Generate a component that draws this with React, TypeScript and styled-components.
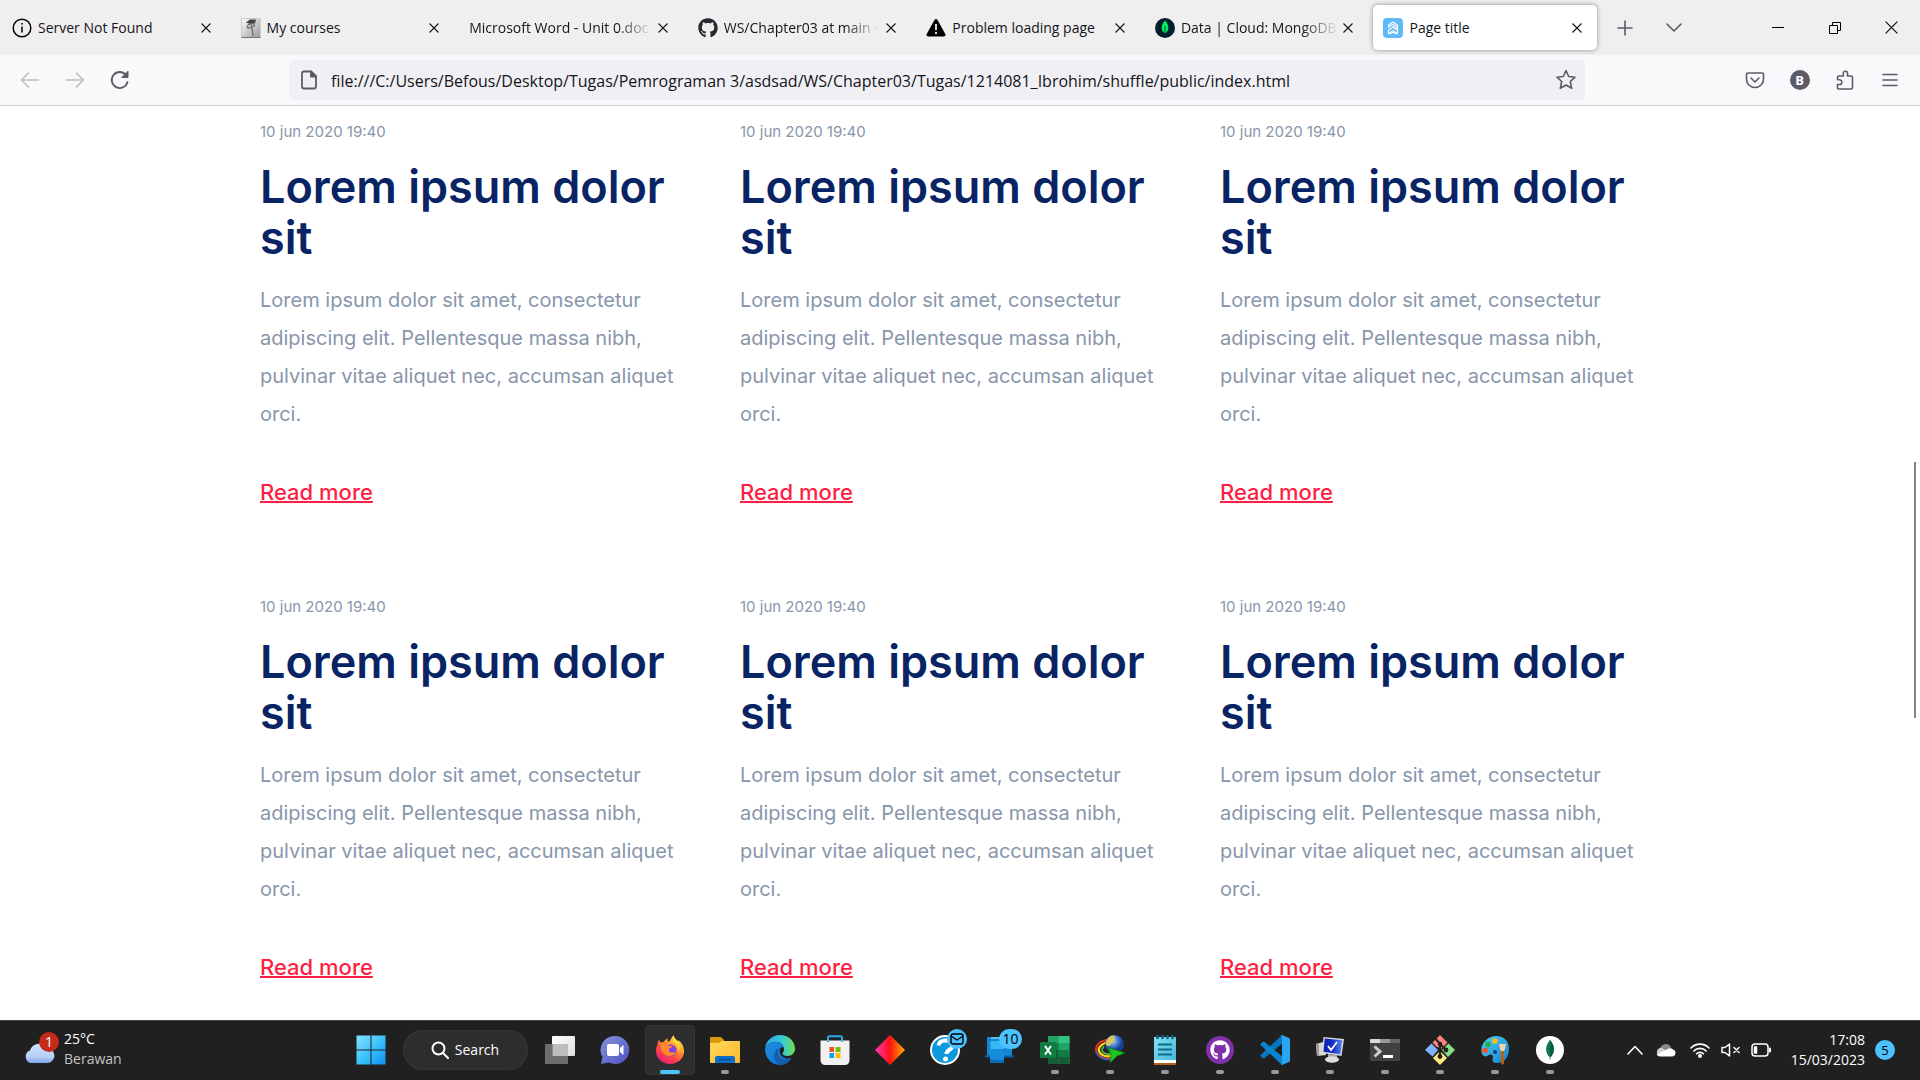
import React from "react";
import styled, { createGlobalStyle } from "styled-components";
import { FaGithub } from "react-icons/fa";

const UI_FONT = '"Open Sans", "Noto Sans", sans-serif';

const GlobalStyle = createGlobalStyle`
  *, *::before, *::after { box-sizing: border-box; }
  body { margin: 0; font-family: Inter, sans-serif; background: #fff; }
  button { border: 0; padding: 0; margin: 0; background: none; font: inherit; color: inherit; }
  svg { display: block; flex: none; }
`;

const Screen = styled.div`
  display: flex;
  flex-direction: column;
  height: 100vh;
  overflow: hidden;
`;

/* ---------- Tab strip ---------- */

const TabBar = styled.header`
  display: flex;
  flex: none;
  height: 55px;
  background: #efefef;
  font-family: ${UI_FONT};
  font-size: 14px;
  color: #15141a;
`;

const TabList = styled.nav`
  display: flex;
  flex: 0 1 1600px;
  min-width: 0;
`;

const TabSlot = styled.div`
  flex: 1 1 0;
  min-width: 0;
  padding: 5px 3px 5px 2px;
`;

const Tab = styled.div<{ $active?: boolean }>`
  display: flex;
  align-items: center;
  height: 45px;
  padding: 0 13px 0 10px;
  border-radius: 5px;
  background: ${(p) => (p.$active ? "#fff" : "transparent")};
  box-shadow: ${(p) => (p.$active ? "0 0 5px rgba(0, 0, 0, 0.4)" : "none")};
`;

const TabTitle = styled.button<{ $fade?: boolean }>`
  display: flex;
  align-items: center;
  flex: 1;
  gap: 6px;
  min-width: 0;
  white-space: nowrap;
  text-align: left;
  line-height: 24px;
  mask-image: ${(p) => (p.$fade ? "linear-gradient(to left, transparent, #000 36px)" : "none")};
`;

const CloseButton = styled.button`
  flex: none;
  width: 14px;
  height: 24px;
  display: grid;
  place-items: center;
  margin-left: 3px;
`;

const StripButton = styled.button`
  width: 49px;
  display: grid;
  place-items: center;
  color: #5b5b66;
`;

const WindowControls = styled.div`
  display: flex;
  margin-left: auto;
`;

const WindowButton = styled.button`
  width: 57px;
  display: grid;
  place-items: center;
  color: #000;
`;

/* ---------- Navigation toolbar ---------- */

const Toolbar = styled.div`
  display: flex;
  align-items: center;
  flex: none;
  height: 51px;
  padding: 0 8px 0 7px;
  background: #f9f9fb;
  border-bottom: 1px solid #cccccf;
`;

const ToolButton = styled.button<{ $dim?: boolean }>`
  width: 45px;
  height: 40px;
  flex: none;
  display: grid;
  place-items: center;
  color: ${(p) => (p.$dim ? "#bdbdc2" : "#5b5b66")};
`;

const AddressBar = styled.form`
  display: flex;
  align-items: center;
  flex: 1;
  min-width: 0;
  height: 40px;
  margin: 0 147px;
  padding: 0 8px 0 10px;
  gap: 12px;
  border-radius: 5px;
  background: #f0f0f4;
  color: #5b5b66;
`;

const AddressInput = styled.input`
  flex: 1;
  min-width: 0;
  border: 0;
  padding: 2px 0 0;
  outline: 0;
  background: transparent;
  font-family: ${UI_FONT};
  font-size: 16px;
  line-height: 24px;
  color: #15141a;
`;

const Avatar = styled.span`
  width: 20px;
  height: 20px;
  border-radius: 50%;
  display: grid;
  place-items: center;
  background: #5b5b66;
  color: #fff;
  font: 700 13px/20px ${UI_FONT};
`;

/* ---------- Page ---------- */

const Viewport = styled.main`
  position: relative;
  flex: 1;
  min-height: 0;
  overflow: hidden;
`;

const PostGrid = styled.div`
  display: grid;
  grid-template-columns: repeat(3, minmax(0, 1fr));
  gap: 85px 40px;
  max-width: 1440px;
  margin: 0 auto;
  padding: 14px 20px 0;
`;

const Post = styled.article`
  display: flex;
  flex-direction: column;
  align-items: flex-start;
`;

const PostDate = styled.time`
  font-size: 15px;
  line-height: 24px;
  color: #8896ab;
`;

const PostTitle = styled.h2`
  margin: 17px 0 18px;
  font-size: 45px;
  font-weight: 600;
  line-height: 51px;
  color: #092464;
`;

const PostText = styled.p`
  margin: 0 0 41px;
  font-size: 20px;
  line-height: 38px;
  color: #8896ab;
`;

const ReadMore = styled.a`
  font-size: 22px;
  font-weight: 500;
  line-height: 36px;
  color: #ff1f45;
  text-decoration: underline;
  text-decoration-thickness: 2px;
`;

const ScrollThumb = styled.div`
  position: absolute;
  top: 39%;
  right: 4px;
  width: 2px;
  height: 28%;
  background: #858585;
`;

/* ---------- Taskbar ---------- */

const Taskbar = styled.footer`
  display: grid;
  grid-template-columns: 1fr auto 1fr;
  align-items: center;
  flex: none;
  height: 60px;
  background: #202020;
  box-shadow: inset 0 1px 0 #404242;
  color: #fff;
  font-family: ${UI_FONT};
  font-size: 14px;
  line-height: 20px;
`;

const Weather = styled.button`
  display: flex;
  align-items: center;
  gap: 5px;
  padding: 0 0 2px 23px;
  text-align: left;
`;

const Muted = styled.span`
  color: #c4c4c4;
`;

const Stack = styled.span`
  display: flex;
  flex-direction: column;
`;

const AppRow = styled.div`
  display: flex;
  align-items: center;
  gap: 5px;
`;

const AppButton = styled.button<{ $active?: boolean; $open?: boolean }>`
  position: relative;
  width: 50px;
  height: 50px;
  display: grid;
  place-items: center;
  border-radius: 5px;
  background: ${(p) => (p.$active ? "#2e2e2e" : "transparent")};
  box-shadow: ${(p) => (p.$active ? "inset 0 0 0 1px #373737" : "none")};

  &::after {
    content: "";
    position: absolute;
    bottom: 1px;
    left: 50%;
    transform: translateX(-50%);
    width: ${(p) => (p.$active ? 20 : 8)}px;
    height: 4px;
    border-radius: 2px;
    background: ${(p) => (p.$active ? "#4cc2ff" : "#999")};
    display: ${(p) => (p.$active || p.$open ? "block" : "none")};
  }
`;

const Badge = styled.span`
  position: absolute;
  top: 4px;
  right: 3px;
  min-width: 20px;
  height: 20px;
  padding: 0 3px;
  border-radius: 10px;
  display: grid;
  place-items: center;
  background: #4cc2ff;
  color: #000;
  font-size: 14px;
  line-height: 20px;
`;

const SearchButton = styled.button`
  display: flex;
  align-items: center;
  justify-content: center;
  gap: 6px;
  width: 125px;
  height: 40px;
  margin: 0 2px;
  border-radius: 20px;
  background: #2d2d2d;
  box-shadow: inset 0 0 0 1px #363636;
`;

const Tray = styled.div`
  display: flex;
  align-items: center;
  justify-content: flex-end;
  padding-right: 25px;
`;

const TrayButton = styled.button<{ $w: number }>`
  width: ${(p) => p.$w}px;
  height: 40px;
  display: grid;
  place-items: center;
`;

const Clock = styled.button`
  display: flex;
  flex-direction: column;
  text-align: right;
  margin: 0 10px 0 13px;
`;

const Count = styled.span`
  width: 20px;
  height: 20px;
  border-radius: 50%;
  background: #4cc2ff;
  color: #000;
  text-align: center;
  font-size: 13px;
`;

/* ---------- Icons ---------- */

const Cross = ({ size = 10 }: { size?: number }) => (
  <svg width={size} height={size} viewBox="0 0 10 10" fill="none" stroke="currentColor" strokeWidth={11 / size}>
    <path d="M.5.5l9 9M9.5.5l-9 9" />
  </svg>
);

const InfoIcon = () => (
  <svg width="20" height="20" viewBox="0 0 20 20" fill="none" stroke="#000" strokeWidth="1.5">
    <circle cx="10" cy="10" r="8.8" />
    <path d="M10 8.5v6" />
    <circle cx="10" cy="5.8" r=".5" fill="#000" strokeWidth="1" />
  </svg>
);

const CoursesIcon = () => (
  <svg width="20" height="20" viewBox="0 0 20 20">
    <defs>
      <linearGradient id="courses" x2="1" y2="1">
        <stop stopColor="#fff" />
        <stop offset="1" stopColor="#999" />
      </linearGradient>
    </defs>
    <rect x=".5" y=".5" width="19" height="19" fill="url(#courses)" stroke="#ccc" />
    <path d="M.5 19.5h19" stroke="#777" />
    <path d="M5 4.500l4-3h6l-1 4-5 .5z" fill="#444" />
    <path d="M8 6c2 0 3 1 3 3l1 9M8 6c-2 2-2 4-1 4 2 0 3-1 4 0M13 5v4" fill="none" stroke="#777" strokeWidth="1.500" />
  </svg>
);

const WarningIcon = () => (
  <svg width="20" height="20" viewBox="0 0 20 20">
    <path d="M8.500 2q1.500-2 3 0l7.800 14q.8 2.500-1.500 2.500H2.200Q-.1 18.500.7 16z" fill="#000" />
    <path d="M10 6v6M10 14v2" stroke="#efefef" strokeWidth="1.800" />
  </svg>
);

const MongoTabIcon = () => (
  <svg width="20" height="20" viewBox="0 0 20 20">
    <circle cx="10" cy="10" r="10" fill="#001e2b" />
    <path d="M10 2.500c5 5.500 4 10.500 0 13-4-2.500-5-7.500 0-13z" fill="#00ed64" />
    <path d="M10 8v9.500" stroke="#001e2b" strokeWidth=".8" />
  </svg>
);

const ShuffleIcon = () => (
  <svg width="20" height="20" viewBox="0 0 20 20" fill="none" stroke="#fff" strokeWidth="1.100" strokeLinejoin="round" strokeLinecap="round">
    <rect width="20" height="20" rx="4" fill="#5fb9f5" stroke="none" />
    <path d="M5.500 8.800V7L10 4l4.500 3v2.200" />
    <path d="M5.500 9L10 6.200l4.500 3v2.600L10 8.800" />
    <path d="M5.500 12.200L10 9l4.500 3v3.800L10 12.600l-4.500 3.200z" />
    <path d="M7.500 15.800L10 14l2.500 1.800" />
  </svg>
);

const WindowsLogo = () => (
  <svg width="30" height="30" viewBox="0 0 30 30">
    <defs>
      <linearGradient id="win" x2="1" y2="1">
        <stop stopColor="#84e2ff" />
        <stop offset=".5" stopColor="#3cc3fb" />
        <stop offset="1" stopColor="#0b8ff5" />
      </linearGradient>
    </defs>
    <path d="M.5.500h14v14h-14zM15.500.500h14v14h-14zM.5 15.500h14v14h-14zM15.500 15.500h14v14h-14z" fill="url(#win)" />
  </svg>
);

const CloudBadge = () => (
  <svg width="36" height="34" viewBox="0 0 36 34">
    <defs>
      <linearGradient id="cloud" y2="1" x2="0">
        <stop stopColor="#d4e3fb" />
        <stop offset=".7" stopColor="#b5cdf6" />
        <stop offset="1" stopColor="#7ba3ec" />
      </linearGradient>
    </defs>
    <path d="M8 31a6.500 6.500 0 0 1-1-12.500 10 10 0 0 1 18-2A7.300 7.300 0 0 1 25 31z" fill="url(#cloud)" />
    <circle cx="26" cy="10" r="10" fill="#c42b1c" />
    <text x="26" y="15" fill="#fff" textAnchor="middle" fontSize="14">1</text>
  </svg>
);

const Art = ({ children }: { children: React.ReactNode }) => (
  <svg width="30" height="30" viewBox="0 0 30 30">{children}</svg>
);

const TaskView = () => (
  <Art>
    <defs>
      <linearGradient id="tv" x2="1" y2="1"><stop stopColor="#fff" /><stop offset="1" stopColor="#ddd" /></linearGradient>
    </defs>
    <rect x="7" y="1" width="23" height="20" rx="1" fill="url(#tv)" />
    <rect y="9" width="23" height="20" rx="1" fill="#7b7b7b" opacity=".85" />
    <path d="M8 9h15v12H8z" fill="#bdbdbd" />
  </Art>
);

const Chat = () => (
  <Art>
    <defs>
      <linearGradient id="chat" y2="1"><stop stopColor="#8297d8" /><stop offset="1" stopColor="#5050c5" /></linearGradient>
    </defs>
    <path d="M15 1a14 14 0 1 1-6 26.500L1 29l1.500-7A14 14 0 0 1 15 1z" fill="url(#chat)" />
    <rect x="7" y="9" width="12" height="12" rx="2" fill="#fff" />
    <path d="M20 13l3.500-3v10L20 17z" fill="#fff" />
  </Art>
);

const Firefox = () => (
  <Art>
    <defs>
      <linearGradient id="ff" x1=".85" x2=".2" y2="1">
        <stop stopColor="#fff44f" /><stop offset=".35" stopColor="#ffa12b" /><stop offset=".65" stopColor="#ff4a42" /><stop offset="1" stopColor="#e31587" />
      </linearGradient>
      <linearGradient id="ffb" y2="1"><stop stopColor="#b833e1" /><stop offset="1" stopColor="#5b4bd8" /></linearGradient>
    </defs>
    <path d="M4 4.500c.3 1.500 1 2.500 2 3 1-.6 2-.8 3.200-.8C10 5 11 4.300 12.500 3.500c-.3 1.500 0 2.500 1 3.500 2.500-1.500 3-5 5-7 .5 3 3 4.500 4.500 6.500l.3-1.500C27 8 29.500 12 29 17.500 28.300 24 22.500 29 15 29S1.500 24 1 16.500c-.2-3 .5-5 1.500-6.500C2.500 8 3 6 4 4.500z" fill="url(#ff)" />
    <circle cx="15.500" cy="15.500" r="6" fill="url(#ffb)" />
    <path d="M6 10c3-2 6-1 7.500 1h4c-.5 1.500-2.500 2-3.500 2.500-.8 2 .5 4 3 4 2 0 2.500-.5 3.500 0-1 3-5 4.500-8.500 3C7 18.500 5 14 6 10z" fill="#ff8a2a" />
    <path d="M18 7c4 2 6 6 5 10 3-4 2-9-2-12l-2-3z" fill="#ffde3c" />
  </Art>
);

const Explorer = () => (
  <Art>
    <defs>
      <linearGradient id="fold" y2="1"><stop stopColor="#ffd95f" /><stop offset="1" stopColor="#fbb82a" /></linearGradient>
    </defs>
    <path d="M0 3q0-1 1-1h9q1 0 2 1l2 2v7H0z" fill="#dc9a0a" />
    <path d="M12 6h17q1 0 1 1v20q0 1-1 1H1q-1 0-1-1V8h9z" fill="url(#fold)" />
    <path d="M5 28v-5q0-2 2-2h16q2 0 2 2v5z" fill="#0f6fc6" />
    <path d="M9 24.500h12" stroke="#0a4a8a" strokeWidth="1.500" />
  </Art>
);

const Edge = () => (
  <Art>
    <defs>
      <linearGradient id="e1" x2="1"><stop stopColor="#22a4e8" /><stop offset=".6" stopColor="#3bc9d2" /><stop offset="1" stopColor="#6fe04b" /></linearGradient>
      <linearGradient id="e2" y2="1"><stop stopColor="#1b8ddf" /><stop offset="1" stopColor="#0c74d4" /></linearGradient>
    </defs>
    <path d="M15 0C7 0 .8 6 .2 13 3 8.500 7 7 11 7c5 0 8 3.500 8 7.500 0 2-1.500 3-1.500 4s2 2.500 5 2.500c4.500 0 7.500-3.500 7.500-7C30 6 23.500 0 15 0z" fill="url(#e1)" />
    <path d="M.1 13.500C-.5 22 6 30 15 30c5 0 9-3 11-6.500C19 25 13 20 15 14c.5-1.500 2-2 3.500-1.500C17.500 9 15 7 11 7 5.500 7 1 10 .1 13.500z" fill="url(#e2)" />
    <path d="M14 12.500c-3 1.500-5 4.500-5 8.500 0 4 2.500 8 7 9 4.500 0 8-3 10-6.500.5-.7-.2-1-.8-.7-2 1.200-4.500 1.600-7 1.200C14 23 11.500 17.500 14 12.500z" fill="#145ea9" />
  </Art>
);

const Store = () => (
  <Art>
    <path d="M8 7V2.500q0-1.200 1.200-1.200h11.600q1.200 0 1.200 1.200V7" fill="none" stroke="#29a9ea" strokeWidth="2" />
    <path d="M.5 5.500h29V25q0 5-5 5h-19q-5 0-5-5z" fill="#f1f1f1" />
    <path d="M9.500 12H14v5H9.500z" fill="#f25022" /><path d="M15.500 12h5v5h-5z" fill="#7fba00" />
    <path d="M9.500 18H14v5H9.500z" fill="#00a4ef" /><path d="M15.500 18h5v5h-5z" fill="#ffb900" />
    <path d="M8 5.500V7M22 5.500V7" stroke="#29a9ea" strokeWidth="2" />
  </Art>
);

const Diamond = () => (
  <Art>
    <defs>
      <linearGradient id="dia" x2="1"><stop stopColor="#ff37b5" /><stop offset=".5" stopColor="#ff1212" /><stop offset="1" stopColor="#ffb000" /></linearGradient>
    </defs>
    <path d="M15 0l15 15-15 15L0 15z" fill="url(#dia)" />
  </Art>
);

const Help = () => (
  <Art>
    <circle cx="15" cy="15" r="14" fill="#0d99dc" stroke="#fff" strokeWidth="2" />
    <path d="M8.500 10.500C9 7 12 5.500 15.500 5.500c4 0 7 2 7 5 0 4.500-6 4-6 8.500" fill="none" stroke="#fff" strokeWidth="4" />
    <circle cx="15.500" cy="24" r="2.500" fill="#fff" />
  </Art>
);

const Phone = () => (
  <Art>
    <path d="M2 2h25v19H2z" fill="#1684d0" /><path d="M0 20.500h29v2H0z" fill="#0b5ea8" />
    <path d="M5.500 6H19v22H5.500z" fill="#36b8f5" /><path d="M5.500 14H19v14H5.500z" fill="#168bdc" /><path d="M5.500 25H19v3H5.500z" fill="#0b69ba" />
    <path d="M6 3h12" stroke="#70d5ff" strokeWidth="1.500" />
  </Art>
);

const Excel = () => (
  <Art>
    <path d="M8 1h21.500v28H8z" fill="#21a366" /><path d="M18.500 1h11v7h-11z" fill="#33c481" />
    <path d="M8 8h10.500v7H8z" fill="#107c41" /><path d="M18.500 15h11v14h-11z" fill="#107c41" /><path d="M8 15h10.500v14H8z" fill="#185c37" /><path d="M18.500 22h11v7h-11z" fill="#185c37" />
    <rect y="7" width="16" height="16" rx="1" fill="#107c41" />
    <path d="M5 11l6 8.500M11 11l-6 8.500" stroke="#fff" strokeWidth="2" />
  </Art>
);

const Downloader = () => (
  <Art>
    <defs>
      <radialGradient id="globe" cx=".4" cy=".3"><stop stopColor="#cfe2ff" /><stop offset=".4" stopColor="#5f97ea" /><stop offset="1" stopColor="#173f91" /></radialGradient>
    </defs>
    <g fill="none" strokeLinecap="round">
      <path d="M11 5C4 6-1 12 2 18c3 5 9 7 15 5" stroke="#e5311d" strokeWidth="2.200" />
      <path d="M10 8c-5 2-8 6-5 10 3 3 7 4 11 3" stroke="#ffd61e" strokeWidth="2.200" />
      <path d="M8.500 12c-2 2-2 4 0 5.500 2 1.500 5 2 7.500 1.500" stroke="#4fb83c" strokeWidth="1.800" />
      <path d="M1 17c2 6 10 9 17 7" stroke="#2f62d8" strokeWidth="1.400" />
    </g>
    <circle cx="19.500" cy="9.500" r="9.500" fill="url(#globe)" />
    <path d="M11 6c2-4 6-6 8-5.500 1.500 1.500 0 3 .5 5-1 2.500-3 2-4 4.500-1 1.500-3 1-4.500 0z" fill="#d9c558" />
    <path d="M13 12.500l17 5.500-8 3-7 7 1-8z" fill="#1fc41f" stroke="#0b7b12" strokeWidth=".8" />
  </Art>
);

const Notepad = () => (
  <Art>
    <defs><linearGradient id="note" y2="1"><stop stopColor="#83e2f4" /><stop offset="1" stopColor="#43b8d8" /></linearGradient></defs>
    <path d="M4 2h22v24H4z" fill="url(#note)" /><path d="M4 25h22v3H4z" fill="#fff" /><path d="M4 28h22v2H4z" fill="#b35c14" />
    <path d="M8 9.500h14M8 14.500h14M8 19.500h14" stroke="#116b8d" strokeWidth="1.800" />
    <path d="M7.500 1v2M12.500 1v2M17.500 1v2M22.500 1v2" stroke="#17607a" strokeWidth="2.600" strokeLinecap="round" />
  </Art>
);

const GithubDesktop = () => (
  <Art>
    <circle cx="15" cy="15" r="14" fill="#8131a7" />
    <FaGithub x="5" y="5" size={20} color="#fff" />
  </Art>
);

const Code = () => (
  <Art>
    <path d="M22 0L0 20.500 2.500 23q1 .6 2 0L23 8z" fill="#0876be" />
    <path d="M22 30L0 9.500 2.500 7q1-.6 2 0L23 22z" fill="#0b84cf" />
    <path d="M22 0l7 3q1 .5 1 1.500v21q0 1-1 1.500l-7 3q-1 0-2-1 2 1.500 2-1V2q0-2.500-2-1 1-1 2-1z" fill="#2aa5f1" />
  </Art>
);

const Putty = () => (
  <Art>
    <defs><linearGradient id="crt" x2="1"><stop stopColor="#0a1fb4" /><stop offset=".5" stopColor="#1530c8" /><stop offset="1" stopColor="#5a8cf0" /></linearGradient></defs>
    <path d="M1 9l7-2 3 13-9 1z" fill="#d8d8d8" /><path d="M1 9l3-1v13l-2 0z" fill="#9c9c9c" />
    <path d="M8.500 2L29 4l-2.500 17L7 18z" fill="#d9d9d9" />
    <path d="M9.800 3.500L27.300 5.200 25.300 19.200 8.500 16.700z" fill="url(#crt)" />
    <path d="M13 11l3 4 6-8" stroke="#fff" strokeWidth="1.800" fill="none" />
    <path d="M13 19l9 1.200V23h-9z" fill="#aaa" /><ellipse cx="17" cy="24.500" rx="7" ry="3.200" fill="#ddd" />
  </Art>
);

const TerminalArt = () => (
  <Art>
    <rect y="4" width="30" height="22" rx="1" fill="#414141" /><path d="M0 5q0-1 1-1h9v4H0z" fill="#d8d8d8" /><path d="M10 4h10v4H10z" fill="#999" /><path d="M20 4h9q1 0 1 1v3H20z" fill="#666" />
    <path d="M4.500 11.500l5.500 5-5.500 5" fill="none" stroke="#ccc" strokeWidth="3" /><path d="M13 21.500h10" stroke="#fff" strokeWidth="3" />
  </Art>
);

const Git = () => (
  <Art>
    <path d="M6.500 8.500L13 15l-5.500 6.500L0 15z" fill="#80b3ff" />
    <path d="M7.500 7.500L15 0l7.500 7.500L16 14l-3-2-1 0z" fill="#ff8080" />
    <path d="M23.500 8.500L30 15l-7 7-6-7z" fill="#87de87" />
    <path d="M15 16l7 7-7 7-7-7z" fill="#ffe680" />
    <path d="M10 3l5 6 6 6M15 8v14" stroke="#202020" strokeWidth="2" fill="none" />
    <circle cx="15" cy="9" r="2.200" fill="#202020" /><circle cx="21" cy="15" r="2.400" fill="#202020" /><circle cx="15" cy="21.500" r="2.400" fill="#202020" />
  </Art>
);

const Paint = () => (
  <Art>
    <defs><linearGradient id="paint" y2="1"><stop stopColor="#48d2fa" /><stop offset="1" stopColor="#177ecc" /></linearGradient></defs>
    <path d="M16 1c8 0 13 5 13 13 0 7-4 14-12 14-5 0-5-3-4-6 0-2-2-3-4-2-3 2-5 2-7-1C-1 10 7 1 16 1z" fill="url(#paint)" />
    <circle cx="15" cy="6" r="2.800" fill="#ffbf17" /><circle cx="8" cy="9.500" r="2.800" fill="#28ad41" /><circle cx="5" cy="15.500" r="2.800" fill="#ef5628" /><circle cx="15" cy="17" r="2" fill="#12406e" />
    <path d="M19 9h7l-1 5-1 2h-3l-1-2z" fill="#eed3ab" /><path d="M21 16h3v12q-1.500 3-3 0z" fill="#b7650d" />
  </Art>
);

const Compass = () => (
  <Art>
    <circle cx="15" cy="15" r="14" fill="#fff" />
    <path d="M15 5c5 6 5.500 12 0 18-5.500-6-5-12 0-18z" fill="#11774f" /><path d="M15 5c5 6 5.500 12 0 18z" fill="#075e40" /><path d="M15 21v4" stroke="#8aa79a" />
  </Art>
);

const Mail = () => (
  <svg width="14" height="12" viewBox="0 0 14 12" fill="none" stroke="#000" strokeWidth="1.400"><rect x="1" y="1" width="12" height="10" rx="2" /><path d="M1 3l6 4 6-4" /></svg>
);

/* ---------- Data ---------- */

const tabs = [
  { title: "Server Not Found", icon: <InfoIcon /> },
  { title: "My courses", icon: <CoursesIcon /> },
  { title: "Microsoft Word - Unit 0.doc", fade: true },
  { title: "WS/Chapter03 at main ·", icon: <FaGithub size={20} color="#24292f" />, fade: true },
  { title: "Problem loading page", icon: <WarningIcon /> },
  { title: "Data | Cloud: MongoDB", icon: <MongoTabIcon />, fade: true },
  { title: "Page title", icon: <ShuffleIcon />, active: true },
];

const apps = [
  { name: "Task view", art: <TaskView /> },
  { name: "Chat", art: <Chat /> },
  { name: "Firefox", art: <Firefox />, active: true },
  { name: "File Explorer", art: <Explorer />, open: true },
  { name: "Edge", art: <Edge /> },
  { name: "Store", art: <Store /> },
  { name: "Diamond", art: <Diamond /> },
  { name: "Help", art: <Help />, badge: <Mail /> },
  { name: "Phone Link", art: <Phone />, badge: "10" },
  { name: "Excel", art: <Excel />, open: true },
  { name: "Download Manager", art: <Downloader />, open: true },
  { name: "Notepad", art: <Notepad />, open: true },
  { name: "GitHub Desktop", art: <GithubDesktop />, open: true },
  { name: "Visual Studio Code", art: <Code />, open: true },
  { name: "PuTTY", art: <Putty />, open: true },
  { name: "Terminal", art: <TerminalArt />, open: true },
  { name: "Git", art: <Git />, open: true },
  { name: "Paint", art: <Paint />, open: true },
  { name: "MongoDB Compass", art: <Compass />, open: true },
];

const line = { fill: "none", stroke: "currentColor", strokeWidth: 1.6, strokeLinecap: "round", strokeLinejoin: "round" } as const;

export default function App() {
  return (
    <Screen>
      <GlobalStyle />
      <TabBar>
        <TabList aria-label="Tabs">
          {tabs.map((t) => (
            <TabSlot key={t.title}>
              <Tab $active={t.active}>
                <TabTitle $fade={t.fade}>{t.icon}{t.title}</TabTitle>
                <CloseButton aria-label={`Close ${t.title}`}><Cross /></CloseButton>
              </Tab>
            </TabSlot>
          ))}
        </TabList>
        <StripButton aria-label="New tab">
          <svg width="16" height="16" viewBox="0 0 16 16" {...line}><path d="M8 1v14M1 8h14" /></svg>
        </StripButton>
        <StripButton aria-label="List all tabs">
          <svg width="16" height="16" viewBox="0 0 16 16" {...line}><path d="M1 4l7 7 7-7" /></svg>
        </StripButton>
        <WindowControls>
          <WindowButton aria-label="Minimize"><svg width="12" height="12" viewBox="0 0 12 12"><path d="M0 5h12v1H0z" /></svg></WindowButton>
          <WindowButton aria-label="Restore"><svg width="12" height="12" viewBox="0 0 12 12" fill="none" stroke="#000"><path d="M.5 3.500h8v8h-8zM3.500 3V.5h8v8H9" /></svg></WindowButton>
          <WindowButton aria-label="Close window"><Cross size={13} /></WindowButton>
        </WindowControls>
      </TabBar>

      <Toolbar>
        <ToolButton $dim aria-label="Back"><svg width="20" height="20" viewBox="0 0 20 20" {...line}><path d="M18.500 10h-17M8.500 3l-7 7 7 7" /></svg></ToolButton>
        <ToolButton $dim aria-label="Forward"><svg width="20" height="20" viewBox="0 0 20 20" {...line}><path d="M1.500 10h17M11.500 3l7 7-7 7" /></svg></ToolButton>
        <ToolButton aria-label="Reload">
          <svg width="20" height="20" viewBox="0 0 20 20" {...line} strokeWidth="1.800"><path d="M17.500 12A8 8 0 1 1 16 5" /><path d="M18 1.500v6h-6z" fill="currentColor" strokeWidth="1" /></svg>
        </ToolButton>
        <AddressBar>
          <svg width="20" height="20" viewBox="0 0 20 20" {...line} strokeWidth="1.800"><path d="M5 1.500h7l5 5V16.500q0 2-2 2H5q-2 0-2-2v-13q0-2 2-2z" /><path d="M12 1.500v5h5z" fill="currentColor" /></svg>
          <AddressInput
            aria-label="Address"
            defaultValue="file:///C:/Users/Befous/Desktop/Tugas/Pemrograman 3/asdsad/WS/Chapter03/Tugas/1214081_Ibrohim/shuffle/public/index.html"
          />
          <svg width="22" height="22" viewBox="0 0 22 22" {...line}><path d="M11 1.500l2.700 6 6.300.7-4.700 4.300 1.400 6.800L11 16l-5.700 3.300 1.400-6.800L2 8.200l6.300-.7z" /></svg>
        </AddressBar>
        <ToolButton aria-label="Save to Pocket"><svg width="20" height="20" viewBox="0 0 20 20" {...line}><path d="M3 3h14q1.500 0 1.500 1.500V9a8.500 8.500 0 0 1-17 0V4.500Q1.500 3 3 3zM6 8l4 4 4-4" /></svg></ToolButton>
        <ToolButton aria-label="Account"><Avatar>B</Avatar></ToolButton>
        <ToolButton aria-label="Extensions">
          <svg width="20" height="20" viewBox="0 0 20 20" {...line}><path d="M2.500 14.500V18q0 1 1 1H16q1.500 0 1.500-1.500V7.500Q17.500 6 16 6H12.500V3.300a2 2 0 0 0-4.200 0V6H4Q2.500 6 2.500 7.500v2.300h2a2.300 2.300 0 0 1 0 4.700z" /></svg>
        </ToolButton>
        <ToolButton aria-label="Menu"><svg width="16" height="16" viewBox="0 0 16 16" {...line}><path d="M1 2.500h14M1 8h14M1 13.500h14" /></svg></ToolButton>
      </Toolbar>

      <Viewport>
        <PostGrid>
          {Array.from({ length: 6 }, (_, i) => (
            <Post key={i}>
              <PostDate dateTime="2020-06-10T19:40">10 jun 2020 19:40</PostDate>
              <PostTitle>Lorem ipsum dolor sit</PostTitle>
              <PostText>
                Lorem ipsum dolor sit amet, consectetur adipiscing elit. Pellentesque massa nibh, pulvinar vitae aliquet nec, accumsan aliquet orci.
              </PostText>
              <ReadMore href="#">Read more</ReadMore>
            </Post>
          ))}
        </PostGrid>
        <ScrollThumb />
      </Viewport>

      <Taskbar>
        <Weather>
          <CloudBadge />
          <Stack><span>25°C</span><Muted>Berawan</Muted></Stack>
        </Weather>
        <AppRow>
          <AppButton aria-label="Start"><WindowsLogo /></AppButton>
          <SearchButton>
            <svg width="18" height="18" viewBox="0 0 18 18" {...line} strokeWidth="2"><circle cx="7.500" cy="7.500" r="6" /><path d="M12 12l5 5" /></svg>
            Search
          </SearchButton>
          {apps.map((a) => (
            <AppButton key={a.name} aria-label={a.name} $active={a.active} $open={a.open}>
              {a.art}
              {a.badge && <Badge>{a.badge}</Badge>}
            </AppButton>
          ))}
        </AppRow>
        <Tray>
          <TrayButton $w={30} aria-label="Show hidden icons"><svg width="16" height="10" viewBox="0 0 16 10" {...line}><path d="M1 9l7-7.500L15 9" /></svg></TrayButton>
          <TrayButton $w={32} aria-label="OneDrive">
            <svg width="20" height="14" viewBox="0 0 20 14"><path d="M4 6a6 6 0 0 1 11-2l-3 5z" fill="#8a8a8a" /><path d="M4 13a4 4 0 1 1 2-8l8 5-5 3z" fill="#cfcfcf" /><path d="M4 13.500q-2 0-3.500-2L13 5.500a4 4 0 0 1 4 1 3.600 3.600 0 0 1-1 7z" fill="#fff" /></svg>
          </TrayButton>
          <TrayButton $w={36} aria-label="Wi-Fi">
            <svg width="20" height="16" viewBox="0 0 20 16" {...line}><path d="M1 6a12.500 12.500 0 0 1 18 0M3.800 9a8.700 8.700 0 0 1 12.400 0M6.600 11.800a4.800 4.800 0 0 1 6.800 0" /><circle cx="10" cy="14" r="1.200" fill="#fff" /></svg>
          </TrayButton>
          <TrayButton $w={26} aria-label="Volume muted">
            <svg width="20" height="16" viewBox="0 0 20 16" {...line} strokeWidth="1.500"><path d="M1 5.500h3L8.500 2v12L4 10.500H1zM13 5.500l5 5M18 5.500l-5 5" /></svg>
          </TrayButton>
          <TrayButton $w={34} aria-label="Battery">
            <svg width="20" height="14" viewBox="0 0 20 14" {...line} strokeWidth="1.500"><rect x="1" y="1" width="16" height="12" rx="3" /><path d="M3.500 4h2v6h-2z" fill="#fff" stroke="#fff" /><path d="M19 5.500v3" strokeWidth="2" /></svg>
          </TrayButton>
          <Clock><span>17:08</span><span>15/03/2023</span></Clock>
          <Count>5</Count>
        </Tray>
      </Taskbar>
    </Screen>
  );
}
